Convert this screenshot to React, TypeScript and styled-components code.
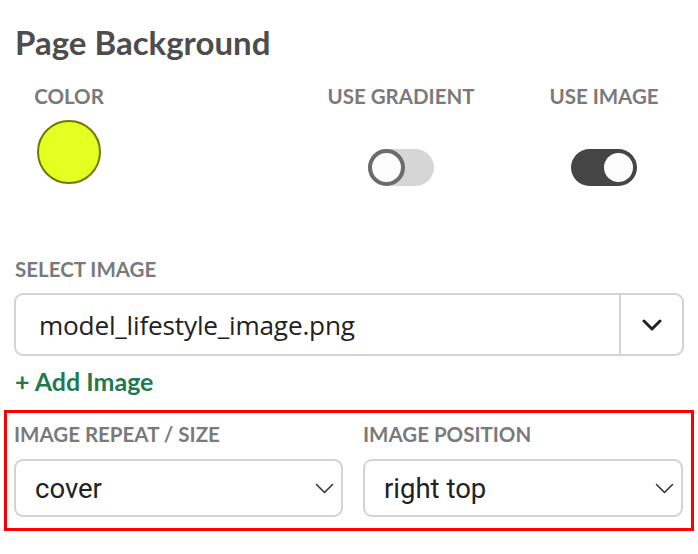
import React from "react";
import styled, { createGlobalStyle } from "styled-components";

const Global = createGlobalStyle`
  html, body { margin: 0; padding: 0; background: #ffffff; }
  body { font-family: Lato, "Liberation Sans", sans-serif; }
`;

const Page = styled.div`
  width: 698px;
  height: 554px;
  box-sizing: border-box;
  padding: 22px 0 0 4px;
  display: flex;
  flex-direction: column;
  overflow: hidden;
`;

const Title = styled.h1`
  margin: 0 0 0 11px;
  font-family: Lato, sans-serif;
  font-weight: 700;
  font-size: 33px;
  line-height: 40px;
  color: #4d4d4d;
`;

const Label = styled.div`
  font-family: Lato, sans-serif;
  font-weight: 700;
  font-size: 20.5px;
  line-height: 22px;
  color: #7a7a7a;
  text-transform: uppercase;
  white-space: nowrap;
`;

const ToggleRow = styled.div`
  display: flex;
  margin-top: 23px;
  height: 173px;
`;

const Field = styled.div<{ $w: number; $ml: number }>`
  width: ${(p) => p.$w}px;
  margin-left: ${(p) => p.$ml}px;
  display: flex;
  flex-direction: column;
  align-items: center;
`;

const Swatch = styled.div<{ $c: string }>`
  margin-top: 13px;
  width: 64px;
  height: 64px;
  box-sizing: border-box;
  border-radius: 50%;
  background: ${(p) => p.$c};
  border: 2px solid #6f7800;
`;

const Track = styled.div<{ $on: boolean }>`
  margin-top: 42px;
  width: 66px;
  height: 37px;
  border-radius: 19px;
  background: ${(p) => (p.$on ? "#454545" : "#d6d6d6")};
  display: flex;
  align-items: center;
  justify-content: ${(p) => (p.$on ? "flex-end" : "flex-start")};
  padding: ${(p) => (p.$on ? "0 4px" : "0")};
  box-sizing: border-box;
`;

const Knob = styled.div<{ $on: boolean }>`
  box-sizing: border-box;
  border-radius: 50%;
  background: #fcfcfc;
  width: ${(p) => (p.$on ? 29 : 37)}px;
  height: ${(p) => (p.$on ? 29 : 37)}px;
  border: ${(p) => (p.$on ? "none" : "4px solid #6b6b6b")};
`;

const Section = styled.div`
  padding: 0 0 0 10px;
  display: flex;
  flex-direction: column;
`;

const SectionLabel = styled(Label)`
  margin-left: 1px;
`;

const ComboBox = styled.div`
  margin-top: 13px;
  width: 670px;
  height: 63px;
  box-sizing: border-box;
  border: 2px solid #d3d3d3;
  border-radius: 9px;
  display: flex;
  align-items: stretch;
`;

const ComboText = styled.div`
  flex: 1;
  display: flex;
  align-items: center;
  padding-left: 23px;
  font-family: "Open Sans", sans-serif;
  font-size: 26.2px;
  color: #222;
  letter-spacing: -0.2px;
`;

const ComboButton = styled.div`
  width: 61px;
  border-left: 2px solid #d3d3d3;
  display: flex;
  align-items: center;
  justify-content: center;
`;

const AddLink = styled.div`
  margin: 11px 0 0 1px;
  font-family: Lato, sans-serif;
  font-weight: 700;
  font-size: 25px;
  line-height: 28px;
  color: #1f7a4f;
`;

const Highlight = styled.div`
  margin-top: 15px;
  width: 690px;
  height: 121px;
  box-sizing: border-box;
  border: 3px solid #ff0000;
  padding: 10px 0 0 7px;
  display: grid;
  grid-template-columns: 329px 320px;
  column-gap: 20px;
`;

const SelectCol = styled.div`
  display: flex;
  flex-direction: column;
`;

const SelectBox = styled.div`
  margin-top: 14px;
  height: 58px;
  box-sizing: border-box;
  border: 2px solid #d3d3d3;
  border-radius: 9px;
  display: flex;
  align-items: center;
  justify-content: space-between;
  padding: 0 7px 0 19px;
  font-family: Roboto, "Liberation Sans", sans-serif;
  font-size: 27.5px;
  color: #222;
`;

const Chevron = ({ thick }: { thick?: boolean }) =>
  thick ? (
    <svg width="20" height="12" viewBox="0 0 20 12">
      <path d="M2 2 L10 10 L18 2" fill="none" stroke="#222" strokeWidth="3" strokeLinecap="round" strokeLinejoin="round" />
    </svg>
  ) : (
    <svg width="19" height="11" viewBox="0 0 19 11">
      <path d="M1.5 1.5 L9.5 9.5 L17.5 1.5" fill="none" stroke="#333" strokeWidth="1.6" strokeLinecap="round" strokeLinejoin="round" />
    </svg>
  );

export default function App() {
  return (
    <>
      <Global />
      <Page>
        <Title>Page Background</Title>
        <ToggleRow>
          <Field $w={110} $ml={10}>
            <Label>Color</Label>
            <Swatch $c="#e4ff22" />
          </Field>
          <Field $w={160} $ml={197}>
            <Label>Use Gradient</Label>
            <Track $on={false}>
              <Knob $on={false} />
            </Track>
          </Field>
          <Field $w={140} $ml={53}>
            <Label>Use Image</Label>
            <Track $on={true}>
              <Knob $on={true} />
            </Track>
          </Field>
        </ToggleRow>
        <Section>
          <SectionLabel>Select Image</SectionLabel>
          <ComboBox>
            <ComboText>model_lifestyle_image.png</ComboText>
            <ComboButton>
              <Chevron thick />
            </ComboButton>
          </ComboBox>
          <AddLink>+ Add Image</AddLink>
        </Section>
        <Highlight>
          <SelectCol>
            <Label>Image Repeat / Size</Label>
            <SelectBox>
              <span>cover</span>
              <Chevron />
            </SelectBox>
          </SelectCol>
          <SelectCol>
            <Label>Image Position</Label>
            <SelectBox>
              <span>right top</span>
              <Chevron />
            </SelectBox>
          </SelectCol>
        </Highlight>
      </Page>
    </>
  );
}
